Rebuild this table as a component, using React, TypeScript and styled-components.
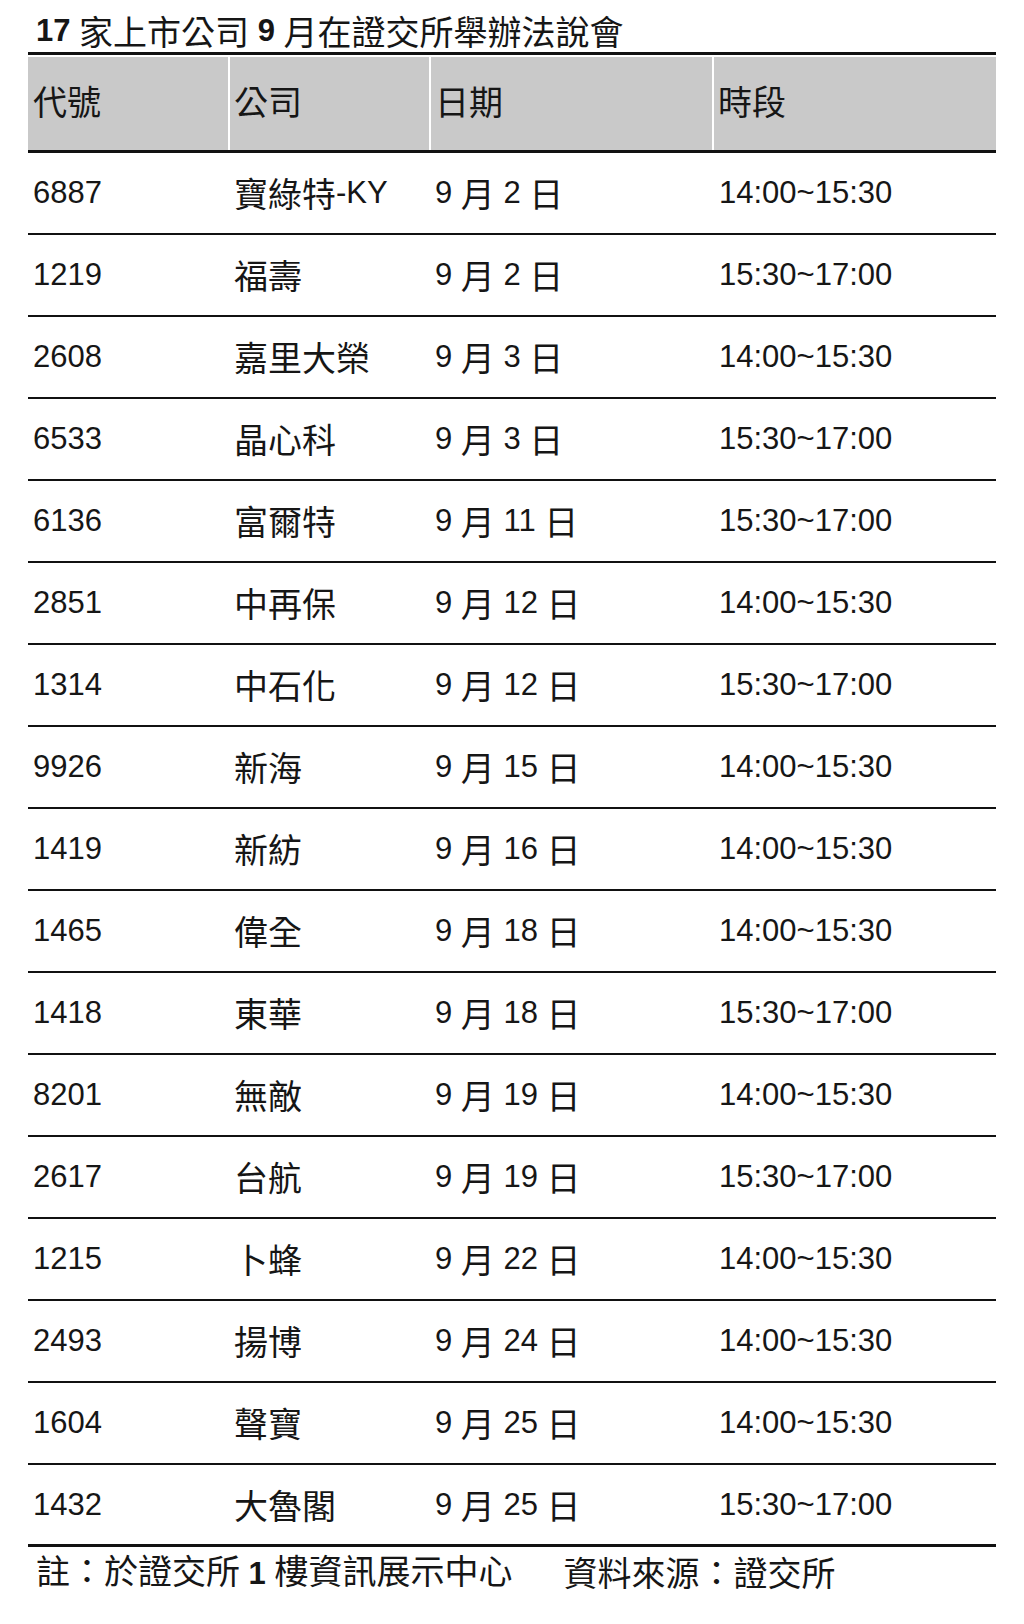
import React from "react";
import styled, { createGlobalStyle } from "styled-components";

const GlobalStyle = createGlobalStyle`
  html, body { margin: 0; padding: 0; background: #ffffff; }
  body {
    font-family: "Liberation Sans", "Noto Sans CJK TC", sans-serif;
    color: #161616;
  }
`;

const Page = styled.div`
  width: 1024px;
  height: 1624px;
  box-sizing: border-box;
  padding: 0 28px;
  background: #ffffff;
`;

const Title = styled.h1`
  margin: 0;
  height: 52px;
  box-sizing: border-box;
  padding: 9px 0 0 8px;
  display: flex;
  align-items: center;
  font-size: 30px;
  font-weight: 400;
  line-height: 40px;
`;

const Table = styled.div`
  display: flex;
  flex-direction: column;
  width: 968px;
`;

const HeaderRow = styled.div`
  display: grid;
  grid-template-columns: 200px 201px 283px 284px;
  height: 101px;
  box-sizing: border-box;
  border-top: 3px solid #111;
  border-bottom: 3px solid #111;
  padding: 2px 2px 0 0;
`;

const HeaderCell = styled.div<{ $divider?: boolean }>`
  display: flex;
  align-items: center;
  box-sizing: border-box;
  background: #c9c9c9;
  padding-left: ${(p) => (p.$divider ? "4px" : "5px")};
  padding-bottom: 6px;
  border-left: ${(p) => (p.$divider ? "2px solid #ffffff" : "none")};
`;

const Row = styled.div<{ $last?: boolean }>`
  display: grid;
  grid-template-columns: 200px 201px 283px 284px;
  height: 82px;
  box-sizing: border-box;
  border-bottom: ${(p) => (p.$last ? "3px" : "2px")} solid #111;
`;

const Cell = styled.div<{ $pad: number }>`
  display: flex;
  align-items: center;
  padding-left: ${(p) => p.$pad}px;
  white-space: nowrap;
`;

const Han = styled.span`
  font-family: "Noto Sans CJK TC", "Noto Sans CJK SC", sans-serif;
  font-size: 34px;
  font-weight: 400;
  line-height: 40px;
`;

const Latin = styled.span<{ $bold?: boolean }>`
  font-family: "Liberation Sans", Arial, sans-serif;
  font-size: 31px;
  font-weight: ${(p) => (p.$bold ? 700 : 400)};
  white-space: pre;
  line-height: 40px;
`;

const Footer = styled.div`
  display: flex;
  align-items: center;
  height: 46px;
  box-sizing: border-box;
  padding: 4px 0 0 8px;
`;

const FooterPart = styled.div<{ $gap?: number }>`
  display: flex;
  align-items: baseline;
  margin-left: ${(p) => p.$gap ?? 0}px;
`;

const CJK = /([\u2E80-\u9FFF\uFF00-\uFFEF]+)/;

function Mixed({ text, bold }: { text: string; bold?: boolean }) {
  const parts = text.split(CJK);
  return (
    <>
      {parts.map((p, i) =>
        p === "" ? null : CJK.test(p) ? (
          <Han key={i}>{p}</Han>
        ) : (
          <Latin key={i} $bold={bold}>
            {p}
          </Latin>
        )
      )}
    </>
  );
}

const rows: [string, string, string, string][] = [
  ["6887", "寶綠特-KY", "9 月 2 日", "14:00~15:30"],
  ["1219", "福壽", "9 月 2 日", "15:30~17:00"],
  ["2608", "嘉里大榮", "9 月 3 日", "14:00~15:30"],
  ["6533", "晶心科", "9 月 3 日", "15:30~17:00"],
  ["6136", "富爾特", "9 月 11 日", "15:30~17:00"],
  ["2851", "中再保", "9 月 12 日", "14:00~15:30"],
  ["1314", "中石化", "9 月 12 日", "15:30~17:00"],
  ["9926", "新海", "9 月 15 日", "14:00~15:30"],
  ["1419", "新紡", "9 月 16 日", "14:00~15:30"],
  ["1465", "偉全", "9 月 18 日", "14:00~15:30"],
  ["1418", "東華", "9 月 18 日", "15:30~17:00"],
  ["8201", "無敵", "9 月 19 日", "14:00~15:30"],
  ["2617", "台航", "9 月 19 日", "15:30~17:00"],
  ["1215", "卜蜂", "9 月 22 日", "14:00~15:30"],
  ["2493", "揚博", "9 月 24 日", "14:00~15:30"],
  ["1604", "聲寶", "9 月 25 日", "14:00~15:30"],
  ["1432", "大魯閣", "9 月 25 日", "15:30~17:00"],
];

const pads = [5, 6, 6, 7];

export default function App() {
  return (
    <Page>
      <GlobalStyle />
      <Title>
        <Latin $bold>17 </Latin>
        <Han>家上市公司</Han>
        <Latin $bold> 9 </Latin>
        <Han>月在證交所舉辦法說會</Han>
      </Title>
      <Table>
        <HeaderRow>
          <HeaderCell>
            <Han>代號</Han>
          </HeaderCell>
          <HeaderCell $divider>
            <Han>公司</Han>
          </HeaderCell>
          <HeaderCell $divider>
            <Han>日期</Han>
          </HeaderCell>
          <HeaderCell $divider>
            <Han>時段</Han>
          </HeaderCell>
        </HeaderRow>
        {rows.map((r, i) => (
          <Row key={r[0] + i} $last={i === rows.length - 1}>
            {r.map((c, j) => (
              <Cell key={j} $pad={pads[j]}>
                <Mixed text={c} />
              </Cell>
            ))}
          </Row>
        ))}
      </Table>
      <Footer>
        <FooterPart>
          <Han>註：於證交所</Han>
          <Latin $bold> 1 </Latin>
          <Han>樓資訊展示中心</Han>
        </FooterPart>
        <FooterPart $gap={51}>
          <Han>資料來源：證交所</Han>
        </FooterPart>
      </Footer>
    </Page>
  );
}
